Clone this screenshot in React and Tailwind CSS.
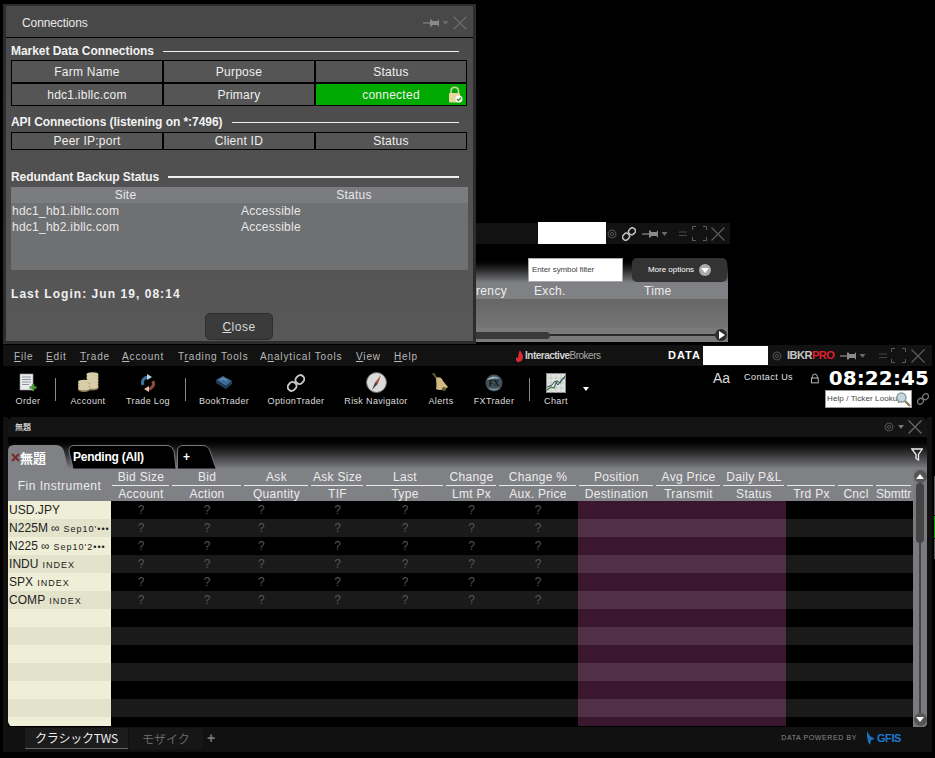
const FONT = { fontFamily: '"Liberation Sans", Arial, sans-serif' };
const CJK = { fontFamily: '"Noto Sans CJK JP", sans-serif' };

function Pin({ className = "" }) {
  return (
    <svg width="26" height="10" viewBox="0 0 26 10" className={className}>
      <path d="M0 5h7" stroke="#777" strokeWidth="1.5" />
      <path d="M7 1.500h1.500L9.500 3h5l1-1.500H16v7h-.5l-1-1.500h-5l-1 1.500H7z" fill="#8a8a8a" />
      <path d="M19.500 3h6l-3 4z" fill="#6a6a6a" />
    </svg>
  );
}
function CloseX({ size = 14, color = "#666" }) {
  return (
    <svg width={size} height={size} viewBox="0 0 14 14">
      <path d="M.5.5l13 13M13.500.5l-13 13" stroke={color} strokeWidth="1.200" fill="none" />
    </svg>
  );
}
function Gear({ color = "#555" }) {
  return (
    <svg width="10" height="10" viewBox="0 0 10 10">
      <circle cx="5" cy="5" r="3.800" fill="none" stroke={color} strokeWidth="1.400" strokeDasharray="1.500 .6" />
      <circle cx="5" cy="5" r="1.500" fill="none" stroke={color} />
    </svg>
  );
}
function Full() {
  return (
    <svg width="15" height="15" viewBox="0 0 15 15">
      <path d="M.5 4V.5H4M11 .5h3.500V4M14.500 11v3.500H11M4 14.500H.5V11" stroke="#5c5c5c" fill="none" />
    </svg>
  );
}
function Minim() {
  return (
    <svg width="8" height="6" viewBox="0 0 8 6">
      <path d="M0 1h8M0 4.500h8" stroke="#444" strokeWidth="1.200" />
    </svg>
  );
}
function Chain({ color = "#bbb", size = 14 }) {
  return (
    <svg width={size} height={size} viewBox="0 0 14 14" fill="none" stroke={color} strokeWidth="1.500">
      <rect x="7" y="0.800" width="6" height="7" rx="2.800" transform="rotate(42 10 4.300)" />
      <rect x="1" y="6.200" width="6" height="7" rx="2.800" transform="rotate(42 4 9.700)" />
    </svg>
  );
}
function LockGreen() {
  return (
    <svg width="15" height="17" viewBox="0 0 15 17">
      <path d="M3 7V4.500a3.800 3.800 0 0 1 7.500 0V7" fill="none" stroke="#cfcfa8" strokeWidth="1.600" />
      <rect x="1" y="7" width="11" height="9.500" rx="1" fill="#e5d9a0" />
      <circle cx="11" cy="13" r="3.500" fill="#fff" />
      <path d="M9 13l1.500 1.500L13 11.800" stroke="#2b9a2b" strokeWidth="1.500" fill="none" />
    </svg>
  );
}

function ConnRow({ cells, h, green }) {
  return (
    <div className="grid grid-cols-3 gap-[2px] bg-black p-px">
      {cells.map((c, i) => (
        <div
          key={i}
          className={`flex items-center justify-center text-[12px] tracking-[0.25px] text-[#f0f0f0] ${h} ${green && i === 2 ? "bg-[#00a900] relative" : "bg-[#555555]"}`}
        >
          {c}
          {green && i === 2 && (
            <span className="absolute right-[3px] top-[2px]">
              <LockGreen />
            </span>
          )}
        </div>
      ))}
    </div>
  );
}
function SectionHead({ title, thick, className = "" }) {
  return (
    <div className={`flex items-center gap-[9px] pr-[8px] ${className}`}>
      <span className="text-[12px] font-bold text-[#f2f2f2] whitespace-nowrap leading-[14px] tracking-[-0.05px]">{title}</span>
      <span className={`flex-1 bg-[#f0f0f0] ${thick ? "h-[2px]" : "h-px"}`} />
    </div>
  );
}

function Connections() {
  return (
    <div className="absolute left-[3px] top-[4px] w-[473px] h-[340px] bg-[#555555] border-x-[3px] border-t-[2px] border-b-[3px] border-[#2c2c2c] flex flex-col" style={FONT}>
      <div className="h-[32px] shrink-0 border-b-[1px] border-black bg-[#484848] flex items-center pt-[2px] pl-[16px] pr-[6px] text-[12px] text-[#e8e8e8]">
        <span className="flex-1 tracking-[-0.1px]">Connections</span>
        <Pin className="mr-[4px]" />
        <CloseX size={14} color="#6b6b6b" />
      </div>
      <div className="flex-1 bg-gradient-to-b from-[#4a4a4a] to-[#585858] pl-[5px] pr-[6px] flex flex-col">
        <SectionHead title="Market Data Connections" className="mt-[6px]" />
        <div className="mt-[2px] w-[456px] flex flex-col bg-black">
          <ConnRow cells={["Farm Name", "Purpose", "Status"]} h="h-[21px]" />
          <ConnRow cells={["hdc1.ibllc.com", "Primary", "connected"]} h="h-[21px]" green />
        </div>
        <SectionHead title="API Connections (listening on *:7496)" className="mt-[9px]" />
        <div className="mt-[3px] w-[456px]">
          <ConnRow cells={["Peer IP:port", "Client ID", "Status"]} h="h-[16px]" />
        </div>
        <SectionHead title="Redundant Backup Status" thick className="mt-[20px]" />
        <div className="mt-[3px] w-[457px] h-[83px] bg-[#6f7072] flex flex-col text-[12px] text-[#e8e8e8] tracking-[0.25px]">
          <div className="h-[16px] bg-[#7b7c80] grid grid-cols-[229px_1fr] text-center leading-[16px]">
            <span>Site</span>
            <span>Status</span>
          </div>
          {["hdc1_hb1.ibllc.com", "hdc1_hb2.ibllc.com"].map((s) => (
            <div key={s} className="h-[16px] grid grid-cols-[229px_1fr] leading-[17px] pl-px">
              <span>{s}</span>
              <span>Accessible</span>
            </div>
          ))}
        </div>
        <div className="mt-[17px] text-[12px] font-bold text-[#f0f0f0] tracking-[1.05px] leading-[14px]">Last Login: Jun 19, 08:14</div>
        <div className="flex justify-center mt-[12px]">
          <button className="w-[68px] h-[27px] rounded-[5px] bg-[#3b3b3b] border border-[#2c2c2c] text-[12px] text-[#d8d8d8] tracking-[0.5px]">
            <span className="underline">C</span>lose
          </button>
        </div>
      </div>
    </div>
  );
}

function BackWindow() {
  return (
    <div className="absolute left-[476px] top-[222px] w-[254px] h-[120px] flex flex-col" style={FONT}>
      <div className="h-[21px] mt-px w-[254px] bg-[#121212] flex items-center shrink-0 relative">
        <div className="absolute left-[62px] -top-px w-[68px] h-[22px] bg-white" />
        <div className="ml-[131px] flex items-center">
          <Gear />
          <span className="ml-[5px]"><Chain size={14} color="#c4c4c4" /></span>
          <Pin className="ml-[6px]" />
          <span className="ml-[11px]"><Minim /></span>
          <span className="ml-[5px]"><Full /></span>
          <span className="ml-[4px]"><CloseX size={14} color="#5c5c5c" /></span>
        </div>
      </div>
      <div className="flex-1 w-[252px] bg-black mt-[14px] flex flex-col">
        <div className="h-[25px] bg-gradient-to-b from-black to-[#808185] flex items-start shrink-0 relative">
          <div className="ml-[52px] w-[95px] h-[24px] bg-white border border-[#aaa] flex items-center pl-[3px] text-[8px] text-[#444] tracking-[-0.1px] whitespace-nowrap">Enter symbol filter</div>
          <div className="ml-[9px] w-[95px] h-[24px] rounded-[5px] bg-[#333] flex items-center justify-center gap-[5px] text-[8px] text-white whitespace-nowrap">
            More options
            <span className="w-[12px] h-[12px] rounded-full bg-[#aaa] flex items-center justify-center">
              <span className="w-0 h-0 border-x-[4px] border-x-transparent border-t-[5px] border-t-white" />
            </span>
          </div>
        </div>
        <div className="h-[16px] bg-[#808185] text-[12px] text-[#ededed] tracking-[0.35px] flex leading-[17px] overflow-hidden shrink-0">
          <span className="w-[28px] shrink-0 whitespace-nowrap">rency</span>
          <span className="ml-[30px] w-[110px] shrink-0">Exch.</span>
          <span>Time</span>
        </div>
        <div className="h-[29px] bg-gradient-to-b from-[#666] to-[#757575] shrink-0" />
        <div className="flex-1 bg-[#7a7a7a] flex items-center relative">
          <div className="w-[74px] h-[7px] rounded-r-full bg-[#3a3a3a]" />
          <div className="flex-1 h-[2px] bg-[#2a2a2a]" />
          <div className="w-[12px] h-[12px] rounded-full bg-[#2e2e2e] flex items-center justify-center mr-px">
            <span className="w-0 h-0 border-y-[4px] border-y-transparent border-l-[6px] border-l-white ml-px" />
          </div>
        </div>
      </div>
    </div>
  );
}

const I = {
  Order: (
    <svg width="20" height="20" viewBox="0 0 20 20">
      <rect x="2" y="1" width="13" height="16" fill="#e8eaee" stroke="#999" strokeWidth=".6" />
      <path d="M4 4h9M4 6.500h9M4 9h9M4 11.500h7" stroke="#8f959e" strokeWidth="1" />
      <path d="M15 11v7M11.500 14.500h7" stroke="#4e9a3a" strokeWidth="2.400" />
    </svg>
  ),
  Account: (
    <svg width="22" height="21" viewBox="0 0 22 21">
      {[[15.500, 2.500], [15.500, 5.500], [15.500, 8.500], [15.500, 11.500], [15.500, 14.500], [7, 10], [7, 13], [7, 16]].map(([x, y], i) => (
        <g key={i}>
          <ellipse cx={x} cy={y + 1.500} rx="6" ry="2.500" fill="#8c7d5c" />
          <ellipse cx={x} cy={y} rx="6" ry="2.300" fill="#d8cda8" />
        </g>
      ))}
    </svg>
  ),
  Log: (
    <svg width="18" height="18" viewBox="0 0 18 18" fill="none">
      <path d="M4 11C2 6 6 3 9 3" stroke="#3f7399" strokeWidth="3" />
      <path d="M8 0l5 3-5 3z" fill="#bcd4e8" />
      <path d="M14 7c2 5-2 8-5 8" stroke="#8f4a40" strokeWidth="3" />
      <path d="M10 18l-5-3 5-3z" fill="#e8bcb0" />
    </svg>
  ),
  Book: (
    <svg width="18" height="16" viewBox="0 0 18 16">
      <path d="M1 5l7-4 9 5-6 5z" fill="#3f6a96" />
      <path d="M1 5v3l10 6 6-5V6l-6 5z" fill="#1f3c5a" />
      <path d="M5 5l3-1.500 4 2" stroke="#7fa8cf" fill="none" />
    </svg>
  ),
  Chain: <Chain size={18} color="#c8c8c8" />,
  Compass: (
    <svg width="21" height="21" viewBox="0 0 21 21">
      <circle cx="10.500" cy="10.500" r="10" fill="#dcdcdc" stroke="#666" strokeWidth="1" />
      <path d="M15 3l-3 8.500-3-1z" fill="#b8503e" />
      <path d="M6 18l3-7.500 3 1z" fill="#444" />
    </svg>
  ),
  Bell: (
    <svg width="18" height="20" viewBox="0 0 18 20">
      <path d="M1 0l3.500 5" stroke="#6a5a3a" strokeWidth="2" />
      <path d="M4 5c3-2 6 0 7 3l5 6c-3 3-9 4-12 2 1-3 0-8 0-11z" fill="#d0ba82" />
      <circle cx="12" cy="16" r="2" fill="#6a5a3a" />
    </svg>
  ),
  FX: (
    <svg width="18" height="18" viewBox="0 0 18 18">
      <circle cx="9" cy="9" r="8.500" fill="#41525c" />
      <path d="M2 6c3-4 9-5 13-1-4-1-9 0-13 1z" fill="#9fb6c0" />
      <path d="M3 14c3 3 9 3 12 0-3 1-9 1-12 0z" fill="#7f98a4" />
      <text x="9" y="12" fontSize="8" fontFamily="Liberation Serif" fontWeight="700" fill="#111" textAnchor="middle">FX</text>
    </svg>
  ),
  Chart: (
    <svg width="20" height="20" viewBox="0 0 20 20">
      <rect x=".5" y=".5" width="19" height="19" fill="#dfe5de" stroke="#888" />
      <path d="M0 5h20M0 10h20M0 15h20M5 0v20M10 0v20M15 0v20" stroke="#b9c0b8" strokeWidth=".6" />
      <path d="M1 17l4-3 3 1 3-7 3 2 5-7" stroke="#3d7a3d" fill="none" strokeWidth="1.200" />
      <path d="M1 14l5-2 3-4 3 4 4-6 3-1" stroke="#3a4a7a" fill="none" strokeWidth="1" />
    </svg>
  ),
};

const tools = [
  ["Order", I.Order, 50],
  "sep",
  ["Account", I.Account, 64],
  ["Trade Log", I.Log, 56],
  "sep2",
  ["BookTrader", I.Book, 76],
  ["OptionTrader", I.Chain, 68],
  ["Risk Navigator", I.Compass, 92],
  ["Alerts", I.Bell, 38],
  ["FXTrader", I.FX, 68],
  "sep3",
  ["Chart", I.Chart, 52],
];

function Toolbar() {
  const menu = [
    ["File", 0, 32], ["Edit", 0, 34], ["Trade", 0, 42], ["Account", 0, 56], ["Trading Tools", 1, 82],
    ["Analytical Tools", 1, 96], ["View", 0, 38], ["Help", 0, 40],
  ];
  const sepMargin = { sep: "ml-[2px]", sep2: "ml-[9px]", sep3: "ml-px" };
  return (
    <>
      <div className="h-[21px] bg-[#121212] flex items-center shrink-0">
        <div className="flex pl-[11px] pt-[2px] text-[10px] tracking-[0.85px] text-[#b8b8b8]">
          {menu.map(([m, idx, w]) => (
            <span key={m} style={{ width: w }} className="shrink-0">
              {m.slice(0, idx)}
              <span className="underline">{m[idx]}</span>
              {m.slice(idx + 1)}
            </span>
          ))}
        </div>
        <div className="ml-[82px] flex items-center w-[152px] shrink-0">
          <svg width="8" height="12" viewBox="0 0 8 12">
            <path d="M4 0c1 3 3 3 3 7s-3 5-5 5-2-3-2-5c1 1 2 1 2 1S2 4 4 0z" fill="#d92b2b" />
          </svg>
          <span className="text-[10px] ml-px tracking-[-0.5px] font-bold text-[#d0d0d0]">Interactive<span className="font-normal text-[#aaa]">Brokers</span></span>
        </div>
        <span className="text-[11px] font-bold text-white tracking-[1px] w-[35px] shrink-0">DATA</span>
        <span className="w-[65px] h-[19px] bg-white shrink-0" />
        <span className="ml-[4px]"><Gear /></span>
        <span className="ml-[5px] text-[11px] font-bold tracking-[-0.5px] text-[#c8c8c8] whitespace-nowrap">IBKR<span className="text-[#e0202c]">PRO</span></span>
        <Pin className="ml-[6px]" />
        <span className="ml-[13px]"><Minim /></span>
        <span className="ml-[4px]"><Full /></span>
        <span className="ml-[5px]"><CloseX size={14} color="#5c5c5c" /></span>
      </div>
      <div className="h-[51px] bg-black flex shrink-0 relative">
        <div className="flex pt-[6px]">
          {tools.map((t, i) =>
            typeof t === "string" ? (
              <span key={i} className={`w-px h-[23px] bg-[#888] mt-[6px] shrink-0 ${sepMargin[t]}`} />
            ) : (
              <div key={t[0]} style={{ width: t[2] }} className="flex flex-col items-center shrink-0">
                <div className="h-[21px] flex items-center justify-center">{t[1]}</div>
                <span className="mt-[2px] text-[9px] tracking-[0.35px] text-[#dcdcdc] whitespace-nowrap">{t[0]}</span>
              </div>
            )
          )}
          <span className="w-0 h-0 border-x-[3px] border-x-transparent border-t-[4px] border-t-white mt-[15px] ml-[1px]" />
        </div>
        <div className="ml-auto w-[222px] shrink-0 flex flex-col pr-[3px]">
          <div className="flex items-center h-[24px]">
            <span className="ml-[3px] text-[14px] text-[#ddd] w-[32px]">Aa</span>
            <span className="text-[9px] tracking-[0.45px] font-normal text-[#e4e4e4] whitespace-nowrap w-[68px]">Contact Us</span>
            <svg width="10" height="11" viewBox="0 0 10 11" className="mr-[9px]">
              <path d="M2.500 5V3.500a2.500 2.500 0 0 1 5 0V5" stroke="#bbb" fill="none" />
              <rect x="1.500" y="5" width="7" height="5" fill="none" stroke="#bbb" />
            </svg>
            <span className="text-[20px] font-bold text-white tracking-[0.1px] leading-none whitespace-nowrap" style={{ fontFamily: '"DejaVu Sans", sans-serif' }}>08:22:45</span>
          </div>
          <div className="flex items-center">
            <div className="ml-[115px] w-[87px] h-[18px] bg-white border border-[#999] flex items-center text-[8px] tracking-[0.1px] text-[#444] whitespace-nowrap overflow-hidden pl-px relative">
              Help / Ticker Lookup
              <svg width="16" height="16" viewBox="0 0 16 16" className="absolute right-0 top-0">
                <circle cx="6.500" cy="6.500" r="4.500" fill="#c8d6df" stroke="#8a9aa3" strokeWidth="1.400" />
                <path d="M10 10l5 5" stroke="#8b7a5e" strokeWidth="2.400" />
              </svg>
            </div>
            <span className="ml-[5px]"><Chain size={12} color="#777" /></span>
          </div>
        </div>
      </div>
    </>
  );
}

const COLS = "grid grid-cols-[103px_60px_72px_67px_55px_80px_53px_80px_77px_67px_64px_51px_38px_38px]";
const HEAD = [
  ["Bid Size", "Account"], ["Bid", "Action"], ["Ask", "Quantity"], ["Ask Size", "TIF"], ["Last", "Type"],
  ["Change", "Lmt Px"], ["Change %", "Aux. Price"], ["Position", "Destination"], ["Avg Price", "Transmit"],
  ["Daily P&L", "Status"], ["", "Trd Px"], ["", "Cncl"], ["", "Sbmttr"],
];
const ROWS = [
  ["USD.JPY"],
  ["N225M", "∞", "Sep10'•••"],
  ["N225", "∞", "Sep10'2•••"],
  ["INDU", "", "INDEX"],
  ["SPX", "", "INDEX"],
  ["COMP", "", "INDEX"],
];

function Tab({ w, active, path, children }) {
  return (
    <div style={{ width: w }} className="h-[24px] relative shrink-0">
      <svg width={w} height="24" viewBox={`0 0 ${w} 24`} className="absolute inset-0">
        <path d={path} fill={active ? "#808185" : "#000"} stroke={active ? "none" : "#777"} strokeWidth="1" />
      </svg>
      <div className="relative h-full flex items-center">{children}</div>
    </div>
  );
}

function Grid() {
  return (
    <div className="flex-1 flex min-h-0">
      <div className="w-[905px] shrink-0 flex flex-col overflow-hidden rounded-bl-[6px]">
        <div className={`${COLS} h-[32px] bg-[#808185] text-[12px] tracking-[0.3px] text-[#ececec] shrink-0`}>
          <div className="flex items-center justify-center tracking-[0.5px] pt-px">Fin Instrument</div>
          {HEAD.map(([a, b], i) => (
            <div key={i} className="flex flex-col text-center whitespace-nowrap overflow-hidden">
              <span className="h-[16px] leading-[16px]">{a}</span>
              <span className="h-px bg-[#e8e8e8] ml-px mr-[2px]" />
              <span className={`h-[15px] leading-[16px] ${i === 12 ? "text-left tracking-[0px] pl-px" : ""}`}>{b}</span>
            </div>
          ))}
        </div>
        {Array.from({ length: 13 }).map((_, r) => {
          const odd = r % 2 === 1;
          const row = ROWS[r];
          return (
            <div key={r} className={`${COLS} ${r === 12 ? "h-[9px]" : "h-[18px]"} shrink-0 ${odd ? "bg-[#1a1a1a]" : "bg-black"}`}>
              <div className={`pl-px text-[12px] leading-[18px] text-[#222] tracking-[0.05px] whitespace-nowrap overflow-hidden ${odd ? "bg-[#e3e3cb]" : "bg-[#efefd7]"}`}>
                {row && (
                  <>
                    {row[0]}
                    {row[1] && <span className="ml-[3px] text-[12px]">{row[1]}</span>}
                    {row[2] && <span className="ml-[4px] text-[9px] tracking-[1px]">{row[2]}</span>}
                  </>
                )}
              </div>
              {HEAD.map((_, c) => {
                const pink = c >= 7 && c <= 9;
                return (
                  <div
                    key={c}
                    className={`text-[12px] leading-[18px] text-[#555] ${c === 2 ? "pl-[15px] text-left" : "text-center"} ${pink ? (odd ? "bg-[#4f3046]" : "bg-[#3a172f]") : ""}`}
                  >
                    {row && c < 7 ? "?" : ""}
                  </div>
                );
              })}
            </div>
          );
        })}
      </div>
      <div className="w-[14px] bg-[#7a7b7e] flex flex-col items-center pt-px shrink-0 rounded-br-[4px]">
        <span className="w-[13px] h-[13px] rounded-full bg-[#555] flex items-center justify-center shrink-0">
          <span className="w-0 h-0 border-x-[4px] border-x-transparent border-b-[5px] border-b-white" />
        </span>
        <span className="w-[8px] h-[60px] rounded-full bg-[#444] shrink-0" />
        <span className="flex-1 w-[2px] bg-[#444]" />
        <span className="w-[13px] h-[13px] rounded-full bg-[#555] flex items-center justify-center mb-px shrink-0">
          <span className="w-0 h-0 border-x-[4px] border-x-transparent border-t-[5px] border-t-white" />
        </span>
      </div>
    </div>
  );
}

function MainWindow() {
  return (
    <div className="absolute left-[3px] top-[345px] w-[929px] h-[407px] bg-[#111] flex flex-col" style={FONT}>
      <Toolbar />
      <div className="flex-1 pl-[5px] pr-[5px] flex flex-col min-h-0 bg-[#111]">
        <div className="flex-1 flex flex-col min-h-0 bg-black">
          <div className="h-[20px] shrink-0 rounded-t-[5px] bg-[#141414] flex items-center pl-[7px] pr-[5px] text-[8px] text-white" style={CJK}>
            <span className="flex-1">無題</span>
            <Gear />
            <span className="ml-[4px] w-0 h-0 border-x-[3px] border-x-transparent border-t-[4px] border-t-[#777]" />
            <span className="ml-[4px]"><CloseX size={14} color="#6a6a6a" /></span>
          </div>
          <div className="h-[32px] shrink-0 bg-gradient-to-b from-black to-[#808185] flex items-end relative">
            <Tab w={60} active path="M0 24V6Q0 0 6 0H48Q54 0 56 6L60 24Z">
              <svg width="9" height="9" viewBox="0 0 9 9" className="ml-[3px] shrink-0">
                <path d="M1 1l7 7M8 1L1 8" stroke="#7a2b2b" strokeWidth="2.200" />
              </svg>
              <span className="text-[13px] font-bold text-white leading-none" style={CJK}>無題</span>
            </Tab>
            <Tab w={109} path="M5 23.500L1 6Q.5 .5 6 .5H100Q104 .5 106 6L108 23.500">
              <span className="ml-[5px] text-[12px] font-bold text-white whitespace-nowrap tracking-[-0.25px]">Pending (All)</span>
            </Tab>
            <Tab w={40} path="M.5 23.500V6Q.5 .5 6 .5H26Q31 .5 33 6L39 23.500">
              <span className="ml-[6px] text-[12px] font-bold text-white">+</span>
            </Tab>
            <svg width="12" height="13" viewBox="0 0 12 13" className="absolute right-[4px] top-[11px]">
              <path d="M.8 1h10.400L7.500 6.500V12L5 10.500v-4z" fill="none" stroke="#eee" strokeWidth="1.300" />
            </svg>
          </div>
          <Grid />
        </div>
        <div className="h-[25px] shrink-0 flex items-start pt-[1px] pl-[17px]">
          <div className="w-[103px] h-[21px] bg-[#1c1c1c] border-b-[1px] border-[#666] flex items-center justify-center text-[12px] text-[#eee] tracking-[-0.2px]" style={CJK}>クラシックTWS</div>
          <div className="ml-px w-[74px] h-[21px] bg-[#161616] flex items-center justify-center text-[12px] text-[#666]" style={CJK}>モザイク</div>
          <span className="ml-[4px] text-[14px] leading-[20px] font-bold text-[#777]">+</span>
          <span className="ml-auto text-[7px] leading-[20px] tracking-[0.6px] text-[#8a8a8a] whitespace-nowrap">DATA POWERED BY</span>
          <svg width="10" height="14" viewBox="0 0 10 14" className="ml-[9px] mt-[3px]">
            <path d="M1 0l3 5 5 3-4 1-1 5-2-3-1-6z" fill="#1e70c0" />
          </svg>
          <span className="ml-[1px] mr-[26px] text-[11px] leading-[20px] font-bold tracking-[-0.4px] text-[#1e78cc]">GFIS</span>
        </div>
      </div>
    </div>
  );
}

export default function App() {
  return (
    <div className="relative w-[935px] h-[758px] bg-black overflow-hidden">
      <BackWindow />
      <Connections />
      <MainWindow />
      <div className="absolute left-[934px] top-[476px] w-px h-[39px] bg-[#555]" />
      <div className="absolute left-[934px] top-[516px] w-px h-[22px] bg-[#00a900]" />
      <div className="absolute left-[934px] top-[539px] w-px h-[20px] bg-[#555]" />
    </div>
  );
}
